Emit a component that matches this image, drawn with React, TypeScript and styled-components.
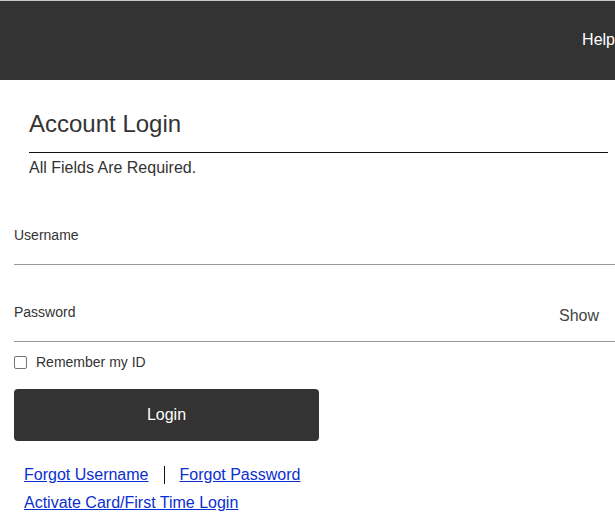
import React from "react";
import styled, { createGlobalStyle } from "styled-components";

const Global = createGlobalStyle`
  html, body { margin: 0; padding: 0; background: #fff; }
  body { font-family: "Liberation Sans", Arial, sans-serif; color: #333; overflow: hidden; }
  * { box-sizing: border-box; }
`;

const Page = styled.div`
  width: 615px;
  height: 522px;
  overflow: hidden;
  border-top: 1px solid #c8c8c8;
`;

const TopBar = styled.header`
  height: 79px;
  background: #333;
  display: flex;
  align-items: center;
  justify-content: flex-end;
  overflow: hidden;
`;

const HelpLink = styled.span`
  color: #fff;
  font-size: 16px;
  margin-right: 0px;
  padding-bottom: 2px;
`;

const Main = styled.main`
  padding: 0 0 0 14px;
`;

const TitleBlock = styled.div`
  margin: 30px 7px 0 15px;
`;

const Title = styled.h1`
  margin: 0;
  font-size: 24px;
  font-weight: 400;
  line-height: 28px;
  color: #333;
  padding-bottom: 14px;
  border-bottom: 1px solid #111;
`;

const Note = styled.p`
  margin: 6px 0 0;
  font-size: 16px;
  line-height: 18px;
  color: #333;
`;

const Field = styled.div<{ $top: number }>`
  margin-top: ${(p) => p.$top}px;
  border-bottom: 1px solid #999;
  display: flex;
  align-items: flex-start;
  justify-content: space-between;
  height: 38px;
`;

const Label = styled.label`
  font-size: 14px;
  line-height: 16px;
  color: #333;
`;

const ShowBtn = styled.span`
  font-size: 16px;
  color: #444;
  margin-top: 3px;
  margin-right: 16px;
`;

const CheckRow = styled.div`
  display: flex;
  align-items: center;
  margin-top: 12px;
  gap: 9px;
`;

const Box = styled.span`
  width: 13px;
  height: 13px;
  border: 1px solid #767676;
  border-radius: 2px;
  background: #fff;
`;

const CheckText = styled.span`
  font-size: 14px;
  color: #333;
`;

const LoginButton = styled.button`
  display: block;
  margin-top: 19px;
  width: 305px;
  height: 52px;
  background: #333;
  color: #fff;
  border: none;
  border-radius: 4px;
  font-family: "Liberation Sans", Arial, sans-serif;
  font-size: 16px;
`;

const Links = styled.div`
  margin: 24px 0 0 10px;
  display: flex;
  flex-direction: column;
  gap: 9px;
`;

const LinkRow = styled.div`
  display: flex;
  align-items: center;
  font-size: 16px;
  line-height: 19px;
`;

const A = styled.a`
  color: #0b2fcf;
  text-decoration: underline;
`;

const Sep = styled.span`
  width: 1px;
  height: 18px;
  background: #111;
  margin: 0 15px 0 15px;
`;

export default function App() {
  return (
    <>
      <Global />
      <Page>
        <TopBar>
          <HelpLink>Help</HelpLink>
        </TopBar>
        <Main>
          <TitleBlock>
            <Title>Account Login</Title>
            <Note>All Fields Are Required.</Note>
          </TitleBlock>
          <Field $top={50}>
            <Label>Username</Label>
          </Field>
          <Field $top={39}>
            <Label>Password</Label>
            <ShowBtn>Show</ShowBtn>
          </Field>
          <CheckRow>
            <Box />
            <CheckText>Remember my ID</CheckText>
          </CheckRow>
          <LoginButton>Login</LoginButton>
          <Links>
            <LinkRow>
              <A href="#">Forgot Username</A>
              <Sep />
              <A href="#">Forgot Password</A>
            </LinkRow>
            <LinkRow>
              <A href="#">Activate Card/First Time Login</A>
            </LinkRow>
          </Links>
        </Main>
      </Page>
    </>
  );
}
